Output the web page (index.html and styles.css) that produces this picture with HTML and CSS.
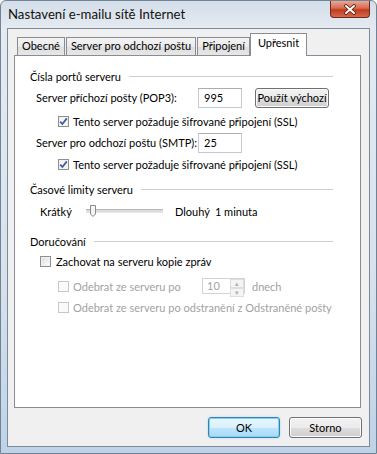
FILE: index.html
```html
<!DOCTYPE html>
<html lang="cs">
<head>
<meta charset="utf-8"/>
<title>Nastavení e-mailu sítě Internet</title>
<link rel="stylesheet" href="styles.css">
</head>
<body>

<div class="window">
	<div class="titlebar">
		<span class="title">Nastavení e-mailu sítě Internet</span>
		<span class="close"><svg width="14" height="11" viewBox="0 0 14 11"><path d="M3 2 L11 9 M11 2 L3 9" stroke="#5a1c10" stroke-width="3.6" stroke-linecap="round"/><path d="M3 2 L11 9 M11 2 L3 9" stroke="#fff" stroke-width="2" stroke-linecap="round"/></svg></span>
	</div>

	<div class="client">
		<div class="tabs">
			<span class="tab">Obecné</span>
			<span class="tab">Server pro odchozí poštu</span>
			<span class="tab">Připojení</span>
			<span class="tab active">Upřesnit</span>
		</div>

		<div class="panel">
			<div class="group">Čísla portů serveru</div>
			<div class="row r-pop">
				<span class="label">Server příchozí pošty (POP3):</span>
				<span class="field">995</span>
				<span class="btn small">Použít výchozí</span>
			</div>
			<div class="row r-ssl1">
				<span class="cb checked"><svg width="9" height="9" viewBox="0 0 9 9"><path d="M1.2 4.6 L3.4 7 L7.8 1.4" fill="none" stroke="#3d5a94" stroke-width="1.7"/></svg></span>
				<span>Tento server požaduje šifrované připojení (SSL)</span>
			</div>
			<div class="row r-smtp">
				<span class="label">Server pro odchozí poštu (SMTP):</span>
				<span class="field">25</span>
			</div>
			<div class="row r-ssl2">
				<span class="cb checked"><svg width="9" height="9" viewBox="0 0 9 9"><path d="M1.2 4.6 L3.4 7 L7.8 1.4" fill="none" stroke="#3d5a94" stroke-width="1.7"/></svg></span>
				<span>Tento server požaduje šifrované připojení (SSL)</span>
			</div>

			<div class="group g-time">Časové limity serveru</div>
			<div class="row r-slider">
				<span class="short">Krátký</span>
				<span class="slider"><span class="track"></span><svg class="thumb" width="8" height="14" viewBox="0 0 8 14"><path d="M1.5 1.5 H6.5 V10 L4 12.5 L1.5 10 Z" fill="#f4f4f4" stroke="#8a8a8a"/></svg></span>
				<span class="long">Dlouhý</span>
				<span>1 minuta</span>
			</div>

			<div class="group g-deliv">Doručování</div>
			<div class="row r-keep">
				<span class="cb"></span>
				<span>Zachovat na serveru kopie zpráv</span>
			</div>
			<div class="row r-days disabled">
				<span class="check-days"><span class="cb"></span><span>Odebrat ze serveru po</span></span>
				<span class="spin"><span class="spin-val">10</span><span class="spin-btns"><span class="up">&#9652;</span><span class="down">&#9662;</span></span></span>
				<span class="unit">dnech</span>
			</div>
			<div class="row r-del disabled">
				<span class="cb"></span>
				<span>Odebrat ze serveru po odstranění z Odstraněné pošty</span>
			</div>
		</div>

		<div class="buttons">
			<span class="btn default">OK</span>
			<span class="btn">Storno</span>
		</div>
	</div>
</div>

</body>
</html>
```

FILE: styles.css
```css
body {
	margin: 0;
	font-family: Lato, "Open Sans", sans-serif;
	font-size: 11px;
	color: #000;
}
/* window frame */
.window {
	width: 377px;
	height: 454px;
	box-sizing: border-box;
	display: flex;
	flex-direction: column;
	padding: 0 6px 6px 6px;
	border: 1px solid #6f8296;
	border-radius: 6px 6px 0 0;
	background: linear-gradient(180deg, #d4dee9 0, #e4eaf0 27px, #d8e2ec 60%, #bed3e8 100%);
}
.titlebar {
	height: 27px;
	display: flex;
	align-items: flex-start;
	flex-shrink: 0;
}
.title {
	margin: 5px 0 0 1px;
	font-size: 13.2px;
	color: #111;
}
.close {
	margin-left: auto;
	width: 40px;
	height: 17px;
	box-sizing: border-box;
	display: flex;
	align-items: center;
	justify-content: center;
	border: 1px solid #6b2a1c;
	border-top: none;
	border-radius: 0 0 4px 4px;
	background: linear-gradient(180deg, #e9a895 0, #d86a4f 45%, #c23a1e 55%, #d2694b 100%);
}
.client {
	flex: 1;
	display: flex;
	flex-direction: column;
	background: #f0f0f0;
	border: 1px solid #7d8a99;
	padding: 4px 8px 0 6px;
}
/* tabs */
.tabs {
	display: flex;
	align-items: flex-start;
	height: 23px;
	padding-left: 3px;
	margin-bottom: -1px;
}
.tab {
	height: 18px;
	margin-top: 4px;
	box-sizing: border-box;
	padding: 1px 4px 0 4px;
	border: 1px solid #898c95;
	border-bottom: none;
	margin-right: 1px;
	background: linear-gradient(180deg, #f3f3f3 0, #ebebeb 50%, #dedede 51%, #e6e6e6 100%);
	white-space: nowrap;
}
.tab.active {
	position: relative;
	z-index: 1;
	height: 23px;
	margin-top: 0;
	margin-left: -1px;
	padding: 2px 7px 0 7px;
	background: #fff;
}
.panel {
	height: 353px;
	box-sizing: border-box;
	border: 1px solid #898c95;
	background: #fff;
	padding: 12px 25px 0 15px;
	display: flex;
	flex-direction: column;
}
/* group headers */
.group {
	display: flex;
	align-items: center;
	height: 16px;
	gap: 8px;
	margin-right: 2px;
}
.group::after {
	content: "";
	flex: 1;
	height: 1px;
	background: #cbcfd4;
}
.g-time {
	margin-top: 9px;
}
.g-deliv {
	margin-top: 12px;
}
/* rows */
.row {
	display: flex;
	align-items: center;
	white-space: nowrap;
}
.label {
	width: 168px;
	padding-left: 6px;
	box-sizing: border-box;
}
.r-pop {
	margin-top: 3px;
	height: 21px;
}
.r-smtp {
	margin-top: 3px;
	height: 21px;
}
.r-ssl1, .r-ssl2 {
	margin-top: 5px;
	height: 16px;
	padding-left: 28px;
	gap: 4px;
}
.r-ssl2 {
	margin-top: 3px;
}
.field {
	width: 44px;
	height: 20px;
	box-sizing: border-box;
	display: flex;
	align-items: center;
	padding-left: 5px;
	border: 1px solid #c5cad2;
	border-top-color: #abadb3;
}
.r-pop .btn {
	margin-left: 13px;
}
/* buttons */
.btn {
	display: flex;
	align-items: center;
	justify-content: center;
	height: 21px;
	box-sizing: border-box;
	padding: 0 4px;
	border: 1px solid #707070;
	border-radius: 3px;
	box-shadow: inset 0 0 0 1px #fbfbfb;
	background: linear-gradient(180deg, #f2f2f2 0, #ebebeb 50%, #dddddd 51%, #cfcfcf 100%);
}
.btn.small {
	width: 74px;
	height: 20px;
}
.buttons {
	display: flex;
	justify-content: flex-end;
	gap: 9px;
	margin: 9px -1px 0 0;
}
.buttons .btn {
	width: 73px;
}
.btn.default {
	width: 72px;
	border-color: #3c7fb1;
	box-shadow: inset 0 0 0 1px #7fd2f0, 0 0 2px #9fd8f2;
	background: linear-gradient(180deg, #eaf6fd 0, #d9f0fc 50%, #bee6fd 51%, #a7d9f5 100%);
}
/* checkboxes */
.cb {
	width: 11px;
	height: 11px;
	box-sizing: border-box;
	display: flex;
	align-items: center;
	justify-content: center;
	border: 1px solid #8e8f8f;
	background: linear-gradient(135deg, #dcdcdc 0, #f4f4f4 70%, #fff 100%);
	box-shadow: inset 0 0 0 1px #f2f2f2;
	flex-shrink: 0;
}
.cb.checked {
	background: #f4f4f4;
}
.r-keep {
	margin-top: 4px;
	height: 16px;
	padding-left: 10px;
	gap: 5px;
}
.disabled {
	color: #a2a2a2;
}
.disabled .cb {
	border-color: #c7c7c7;
	background: #fafafa;
	box-shadow: none;
}
.r-days {
	margin-top: 8px;
	height: 18px;
	padding-left: 28px;
}
.check-days {
	display: flex;
	align-items: center;
	gap: 4px;
	width: 144px;
}
.spin {
	width: 43px;
	height: 16px;
	box-sizing: border-box;
	display: flex;
	border: 1px solid #d3d3d3;
}
.spin-val {
	flex: 1;
	padding-left: 4px;
	line-height: 14px;
}
.spin-btns {
	width: 14px;
	display: flex;
	flex-direction: column;
	font-size: 7px;
	color: #b0b0b0;
}
.spin-btns span {
	flex: 1;
	display: flex;
	align-items: center;
	justify-content: center;
	border: 1px solid #dedede;
	background: #f4f4f4;
	line-height: 1;
}
.unit {
	margin-left: 7px;
}
.r-del {
	margin-top: 4px;
	height: 16px;
	padding-left: 28px;
	gap: 4px;
}
/* slider */
.r-slider {
	margin-top: 4px;
	height: 20px;
	padding-left: 10px;
}
.short {
	width: 46px;
}
.slider {
	width: 77px;
	height: 14px;
	position: relative;
	display: flex;
	align-items: center;
}
.track {
	flex: 1;
	height: 2px;
	border-top: 1px solid #b9b9b9;
	border-bottom: 1px solid #e8e8e8;
	background: #dcdcdc;
}
.thumb {
	position: absolute;
	left: 3px;
	top: 0;
}
.long {
	margin-left: 12px;
	margin-right: 5px;
}
```
